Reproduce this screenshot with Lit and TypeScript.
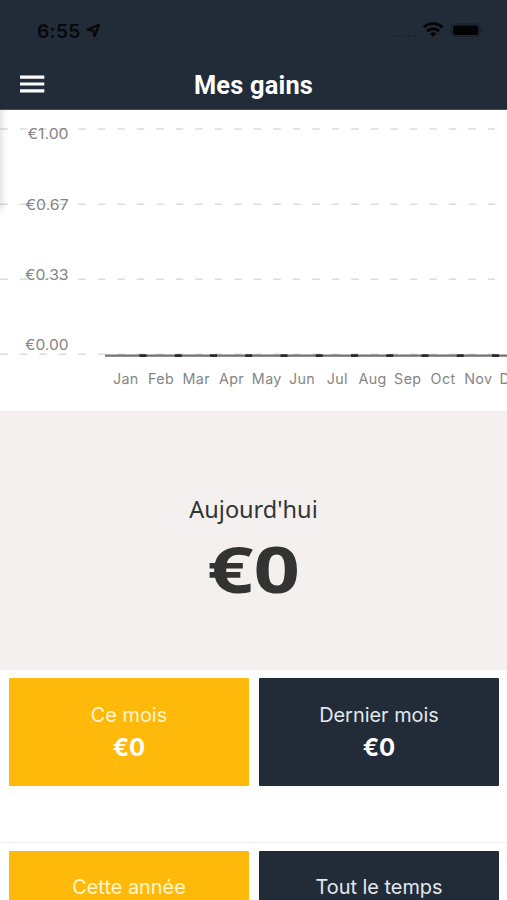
import { LitElement, html, svg, css } from "lit";
import { customElement } from "lit/decorators.js";

const TICKS = [
  { label: "€1.00", line: 19, base: 29, x: 27.5 },
  { label: "€0.67", line: 94.3, base: 99.5, x: 25.5 },
  { label: "€0.33", line: 169.3, base: 169.8, x: 25 },
  { label: "€0.00", line: 244.3, base: 240, x: 25 },
];
const MONTHS = ["Jan", "Feb", "Mar", "Apr", "May", "Jun", "Jul", "Aug", "Sep", "Oct", "Nov", "Dec"];
const STEP = 35.25;

@customElement("earnings-chart")
export class EarningsChart extends LitElement {
  static styles = css`
    :host { display: block; height: 301px; background: #fff; position: relative; overflow: hidden; }
    svg { display: block; }
    .edge { position: absolute; left: -14px; top: -12px; width: 14px; height: 112px; box-shadow: 0 0 10px rgba(0, 0, 0, 0.2); }
    .grid { stroke: #dcdcdc; stroke-width: 1.6; stroke-dasharray: 7.5 12; }
    .axis { stroke: #717171; stroke-width: 2.4; }
    .joint { stroke: #262626; stroke-width: 2.6; }
    text { font: 14px Inter, sans-serif; fill: #858585; }
    .month { text-anchor: middle; font-size: 14.3px; letter-spacing: 0.4px; }
  `;
  render() {
    return html`
      <svg width="507" height="301" viewBox="0 0 507 301">
        ${TICKS.map((t) => svg`
          <line class="grid" x1="0.3" x2="495" y1=${t.line} y2=${t.line}></line>
          <text x=${t.x} y=${t.base} textLength=${68.6 - t.x} lengthAdjust="spacingAndGlyphs">${t.label}</text>`)}
        <line class="axis" x1="105" x2="507" y1="245.6" y2="245.6"></line>
        ${MONTHS.map((m, i) => svg`
          <line class="joint" x1=${139.5 + i * STEP} x2=${146.5 + i * STEP} y1="245.6" y2="245.6"></line>
          <text class="month" x=${125.8 + i * STEP} y="273.6">${m}</text>`)}
      </svg>
      <div class="edge"></div>
    `;
  }
}

@customElement("app-root")
export class AppRoot extends LitElement {
  static styles = css`
    :host { display: flex; flex-direction: column; height: 900px; overflow: hidden; background: #fff; font-family: Inter, sans-serif; }
    * { box-sizing: border-box; }
    header { height: 110px; flex: none; background: #222b38; border-bottom: 1px solid #454d58; }
    .status { height: 60px; display: flex; align-items: center; padding: 2px 24px 0 37px; color: #06080c; }
    .time { font-size: 19.2px; font-weight: 600; letter-spacing: 0.25px; }
    .arrow { margin: -1px 0 0 5px; }
    .signals { margin-left: auto; display: flex; align-items: center; }
    .dots { width: 26px; height: 2px; margin: 10px 4px 0 0; background: repeating-linear-gradient(90deg, #1c2430 0 3px, #222b38 3px 5px); }
    .bar { height: 49px; display: grid; grid-template-columns: 60px 1fr 60px; align-items: center; }
    .menu { margin: -1px 0 0 20px; display: block; }
    h1 { margin: 0; text-align: center; font: 700 25.4px Roboto, sans-serif; letter-spacing: 0.2px; color: #fff; }
    earnings-chart { flex: none; }
    .today { height: 259px; flex: none; background: #f4f0ef; color: #333; text-align: center; padding-top: 80px; }
    .today-label { font: 23.5px/36px "Noto Sans", sans-serif; }
    .today-value { font: 700 65px/80px "Noto Sans", sans-serif; margin-top: 1px; transform: scaleX(1.25); }
    .row { height: 172.5px; flex: none; display: grid; grid-template-columns: 1fr 1fr; gap: 10px; padding: 8px 8px 0 9px; border-bottom: 1px solid #f0f0f0; }
    .card { height: 108px; border-radius: 1px; background: #222b38; color: #e3e8ef; text-align: center; padding-top: 22.5px; }
    .card.gold { background: #ffb90a; color: #fff6d0; }
    .label { font-size: 19.9px; line-height: 28px; }
    .value { font-size: 24px; line-height: 28px; font-weight: 700; color: #fff; margin-top: 5px; }
  `;
  card(label: string, gold: boolean, value = "") {
    return html`<div class="card ${gold ? "gold" : ""}">
      <div class="label">${label}</div>
      <div class="value">${value}</div>
    </div>`;
  }
  render() {
    return html`
      <header>
        <div class="status">
          <span class="time">6:55</span>
          <svg class="arrow" width="15" height="15" viewBox="0 0 15 15">
            <path d="M13 1.8 1.6 6.6 7.4 7.6 8.6 13Z" fill="none" stroke="#06080c" stroke-width="2.2" stroke-linejoin="round"></path>
          </svg>
          <div class="signals">
            <div class="dots"></div>
            <svg width="60" height="18" viewBox="0 0 60 18">
              <g fill="none" stroke="#030507" stroke-width="2.9">
                <path d="M.9 5.4a13.2 13.2 0 0 1 18.4 0"></path>
                <path d="M4.2 9.1a8.4 8.4 0 0 1 11.8 0"></path>
              </g>
              <path d="M10.1 14.7 7 11.6a4.4 4.4 0 0 1 6.2 0Z" fill="#030507"></path>
              <rect x="28.3" y="1.9" width="28.5" height="12.4" rx="3.6" fill="none" stroke="#181e28"></rect>
              <rect x="30" y="3.4" width="25.3" height="9.6" rx="2.2" fill="#020304"></rect>
              <path d="M58.3 6.4q2 1.7 0 3.6Z" fill="#11161e"></path>
            </svg>
          </div>
        </div>
        <div class="bar">
          <svg class="menu" width="25" height="19" viewBox="0 0 25 19">
            <path d="M0 2.1h24.3M0 9h24.3M0 15.9h24.3" stroke="#fff" stroke-width="3.2"></path>
          </svg>
          <h1>Mes gains</h1>
        </div>
      </header>
      <earnings-chart></earnings-chart>
      <section class="today">
        <div class="today-label">Aujourd'hui</div>
        <div class="today-value">€0</div>
      </section>
      <section class="row">${this.card("Ce mois", true, "€0")}${this.card("Dernier mois", false, "€0")}</section>
      <section class="row">${this.card("Cette année", true)}${this.card("Tout le temps", false)}</section>
    `;
  }
}
